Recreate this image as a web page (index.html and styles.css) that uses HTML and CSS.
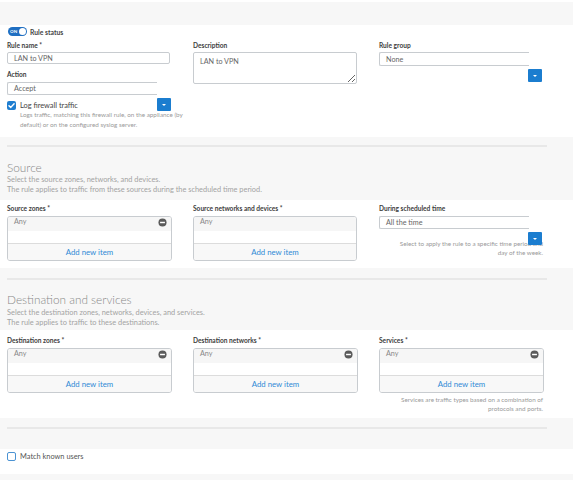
FILE: index.html
```html
<!DOCTYPE html>
<html>
<head>
<meta charset="utf-8">
<link rel="stylesheet" href="styles.css">
</head>
<body>
<div class="page">
  <div class="band band-top"></div>

  <section class="white general">
    <div class="toggle-row">
      <span class="toggle"><span class="toggle-on">ON</span><span class="knob"></span></span>
      <span class="toggle-label">Rule status</span>
    </div>
    <div class="grid">
      <div class="col">
        <div class="label">Rule name *</div>
        <div class="field field-name">LAN to VPN</div>
        <div class="label label-action">Action</div>
        <div class="field field-select field-action">Accept</div>
        <div class="check-row">
          <div class="check-block">
            <div class="check-line">
              <span class="checkbox checked"><svg viewBox="0 0 10 10" width="9" height="9"><path d="M2.2 5.2 L4.2 7.1 L7.9 3" fill="none" stroke="#fff" stroke-width="1.6" stroke-linecap="round" stroke-linejoin="round"/></svg></span>
              <span class="check-text">Log firewall traffic</span>
            </div>
            <div class="check-help">Logs traffic, matching this firewall rule, on the appliance (by<br>default) or on the configured syslog server.</div>
          </div>
          <span class="dd-btn"><span class="caret"></span></span>
        </div>
      </div>
      <div class="col">
        <div class="label">Description</div>
        <textarea class="desc-area">LAN to VPN</textarea>
      </div>
      <div class="col">
        <div class="label">Rule group</div>
        <div class="field field-select field-group">None</div>
        <span class="dd-btn dd-under"><span class="caret"></span></span>
      </div>
    </div>
  </section>

  <section class="band head head-source">
    <div class="rule-line"></div>
    <h2 class="title">Source</h2>
    <p class="desc">Select the source zones, networks, and devices.<br>The rule applies to traffic from these sources during the scheduled time period.</p>
  </section>

  <section class="white fields fields-source">
    <div class="grid">
      <div class="col">
        <div class="label">Source zones *</div>
        <div class="listbox">
          <div class="list-item"><span>Any</span><svg class="minus" viewBox="0 0 10 10" width="9" height="9"><circle cx="5" cy="5" r="4.5" fill="#5b5b5b"/><rect x="2.3" y="4.2" width="5.4" height="1.6" fill="#fff"/></svg></div>
          <div class="list-space"></div>
          <div class="list-add">Add new item</div>
        </div>
      </div>
      <div class="col">
        <div class="label">Source networks and devices *</div>
        <div class="listbox">
          <div class="list-item"><span>Any</span></div>
          <div class="list-space"></div>
          <div class="list-add">Add new item</div>
        </div>
      </div>
      <div class="col">
        <div class="label">During scheduled time</div>
        <div class="field field-select field-time">All the time</div>
        <span class="dd-btn dd-under"><span class="caret"></span></span>
        <div class="help help-time">Select to apply the rule to a specific time period and<br>day of the week.</div>
      </div>
    </div>
  </section>

  <section class="band head head-dest">
    <div class="rule-line"></div>
    <h2 class="title">Destination and services</h2>
    <p class="desc">Select the destination zones, networks, devices, and services.<br>The rule applies to traffic to these destinations.</p>
  </section>

  <section class="white fields fields-dest">
    <div class="grid">
      <div class="col">
        <div class="label">Destination zones *</div>
        <div class="listbox">
          <div class="list-item"><span>Any</span><svg class="minus" viewBox="0 0 10 10" width="9" height="9"><circle cx="5" cy="5" r="4.5" fill="#5b5b5b"/><rect x="2.3" y="4.2" width="5.4" height="1.6" fill="#fff"/></svg></div>
          <div class="list-space"></div>
          <div class="list-add">Add new item</div>
        </div>
      </div>
      <div class="col">
        <div class="label">Destination networks *</div>
        <div class="listbox">
          <div class="list-item"><span>Any</span><svg class="minus" viewBox="0 0 10 10" width="9" height="9"><circle cx="5" cy="5" r="4.5" fill="#5b5b5b"/><rect x="2.3" y="4.2" width="5.4" height="1.6" fill="#fff"/></svg></div>
          <div class="list-space"></div>
          <div class="list-add">Add new item</div>
        </div>
      </div>
      <div class="col">
        <div class="label">Services *</div>
        <div class="listbox">
          <div class="list-item"><span>Any</span><svg class="minus" viewBox="0 0 10 10" width="9" height="9"><circle cx="5" cy="5" r="4.5" fill="#5b5b5b"/><rect x="2.3" y="4.2" width="5.4" height="1.6" fill="#fff"/></svg></div>
          <div class="list-space"></div>
          <div class="list-add">Add new item</div>
        </div>
        <div class="help help-services">Services are traffic types based on a combination of<br>protocols and ports.</div>
      </div>
    </div>
  </section>

  <section class="band sep">
    <div class="rule-line"></div>
  </section>

  <section class="white users">
    <span class="checkbox empty"></span>
    <span class="check-text users-text">Match known users</span>
  </section>

  <div class="band band-bottom"></div>
</div>
</body>
</html>
```

FILE: styles.css
```css
* { box-sizing: border-box; }

body {
  margin: 0;
  background: #ffffff;
  font-family: Lato, "Open Sans", "Liberation Sans", sans-serif;
  color: #333;
}

.page {
  width: 573px;
  padding-top: 2px;
}

.band { background: #f7f7f7; }
.white { background: #ffffff; }

.band-top { height: 23px; }
.band-bottom { height: 8px; }

/* general section */
.general {
  height: 112px;
}

.toggle-row {
  display: flex;
  align-items: center;
  gap: 3px;
  padding: 2px 0 0 8px;
  height: 11px;
}

.toggle {
  display: flex;
  align-items: center;
  justify-content: space-between;
  width: 19px;
  height: 9px;
  border-radius: 5px;
  background: #1f6fc2;
  padding: 0 1px 0 2px;
}

.toggle-on {
  font-size: 4.5px;
  font-weight: 700;
  color: #fff;
  line-height: 9px;
}

.knob {
  width: 7px;
  height: 7px;
  border-radius: 50%;
  background: #fff;
}

.toggle-label {
  font-size: 6.8px;
  font-weight: 700;
  color: #444;
}

.grid {
  display: grid;
  grid-template-columns: 165px 165px 165px;
  column-gap: 21px;
  padding-left: 7px;
}

.general .grid { margin-top: 4px; }

.col {
  display: flex;
  flex-direction: column;
  align-items: flex-start;
}

.label {
  font-size: 6.6px;
  font-weight: 700;
  color: #3d3d3d;
  line-height: 10px;
  height: 10px;
  white-space: nowrap;
}

.field {
  margin-top: 2px;
  border: 1px solid #c8ccd0;
  border-radius: 2px;
  font-size: 7.2px;
  color: #666;
  padding-left: 6px;
  display: flex;
  align-items: center;
  background: #fff;
}

.field-name { width: 163px; height: 12px; }

.label-action { margin-top: 5px; }

.field-select {
  border-right: none;
  border-radius: 2px 0 0 2px;
  width: 150px;
}

.field-action { height: 13px; margin-top: 3px; }
.field-group { height: 14px; }
.field-time { height: 13px; margin-top: 3px; }

.dd-btn {
  display: flex;
  align-items: center;
  justify-content: center;
  width: 14px;
  height: 13px;
  background: #1b7dcf;
  border-radius: 1px;
  flex: none;
}

.caret {
  width: 0;
  height: 0;
  border-left: 2.5px solid transparent;
  border-right: 2.5px solid transparent;
  border-top: 2px solid #fff;
}

.dd-under {
  margin-left: 149px;
  margin-top: 3px;
  position: relative;
  z-index: 1;
}

.check-row {
  display: flex;
  margin-top: 3px;
  width: 164px;
}

.check-block {
  width: 150px;
  white-space: nowrap;
  padding-top: 2px;
}

.check-line {
  display: flex;
  align-items: center;
  gap: 4px;
  height: 10px;
}

.checkbox {
  width: 9px;
  height: 9px;
  border-radius: 2px;
  display: flex;
  align-items: center;
  justify-content: center;
  flex: none;
}

.checkbox.checked { background: #1f7ed0; }

.checkbox.empty {
  border: 1.5px solid #4b93d3;
  background: #fff;
}

.check-text {
  font-size: 7.4px;
  color: #444;
}

.check-help {
  padding-left: 13px;
  font-size: 6.3px;
  line-height: 9.5px;
  color: #9a9a9a;
}

.desc-area {
  margin: 2px 0 0 0;
  width: 164px;
  height: 32px;
  border: 1px solid #c8ccd0;
  border-radius: 2px;
  font-family: Lato, "Open Sans", "Liberation Sans", sans-serif;
  font-size: 7.2px;
  color: #666;
  padding: 4px 6px;
  resize: both;
  outline: none;
}

/* headings */
.head { padding-top: 8px; }
.head-source { height: 63px; }
.head-dest { height: 62px; padding-top: 10px; }

.rule-line {
  margin-left: 7px;
  width: 540px;
  height: 2px;
  background: #e8e8e8;
}

.title {
  margin: 14px 0 0 7px;
  font-size: 11.8px;
  font-weight: 300;
  line-height: 14px;
  color: #888;
}

.head-dest .title { margin-top: 13px; }

.desc {
  margin: 0 0 0 7px;
  font-size: 7.4px;
  line-height: 10px;
  color: #a3a3a3;
}

.head-dest .desc { margin-top: 1px; }

/* field sections */
.fields-source { height: 68px; padding-top: 3px; }
.fields-dest { height: 88px; padding-top: 5px; }

.listbox {
  margin-top: 3px;
  width: 165px;
  height: 45px;
  border: 1px solid #c8ccd0;
  border-radius: 3px;
  overflow: hidden;
  display: flex;
  flex-direction: column;
}

.fields-source .col:nth-child(2) .listbox { width: 164px; }

.list-item {
  height: 14px;
  background: #f6f6f6;
  display: flex;
  justify-content: space-between;
  align-items: flex-start;
  padding: 0 4px 0 6px;
  font-size: 7.2px;
  line-height: 10px;
  color: #888;
}

.minus { margin-top: 1px; }

.list-space { height: 12px; background: #fff; }

.list-add {
  flex: 1;
  border-top: 1px solid #dcdcdc;
  background: #f8f8f8;
  display: flex;
  align-items: center;
  justify-content: center;
  font-size: 7.8px;
  color: #2f8ad6;
}

.help {
  width: 164px;
  text-align: right;
  font-size: 6.3px;
  line-height: 9px;
  color: #9a9a9a;
  white-space: nowrap;
}

.help-time { margin-top: -6px; }
.help-services { margin-top: 2px; }

.sep { height: 31px; padding-top: 9px; }

.users {
  height: 25px;
  display: flex;
  align-items: flex-start;
  gap: 4px;
  padding: 3px 0 0 7px;
}

.users-text { color: #555; line-height: 10px; }
```
